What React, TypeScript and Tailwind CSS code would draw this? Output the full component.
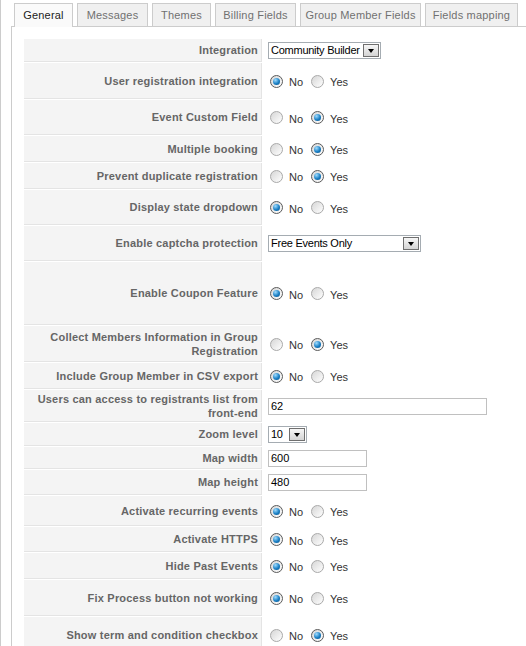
import React from 'react';

type Row = {
  label: React.ReactNode;
  h: string;
  kind: 'radio' | 'select' | 'input';
  yes?: boolean;
  value?: string;
  w?: string;
};

const tabs = [
  { label: 'General', w: 'w-[59px]', active: true },
  { label: 'Messages', w: 'w-[71px]' },
  { label: 'Themes', w: 'w-[59px]' },
  { label: 'Billing Fields', w: 'w-[81px]' },
  { label: 'Group Member Fields', w: 'w-[121px]' },
  { label: 'Fields mapping', w: 'w-[93px]' },
];

const rows: Row[] = [
  { label: 'Integration', h: 'h-[23px]', kind: 'select', value: 'Community Builder', w: 'w-[113px]' },
  { label: 'User registration integration', h: 'h-[36px]', kind: 'radio' },
  { label: 'Event Custom Field', h: 'h-[35px]', kind: 'radio', yes: true },
  { label: 'Multiple booking', h: 'h-[26px]', kind: 'radio', yes: true },
  { label: 'Prevent duplicate registration', h: 'h-[26px]', kind: 'radio', yes: true },
  { label: 'Display state dropdown', h: 'h-[35px]', kind: 'radio' },
  { label: 'Enable captcha protection', h: 'h-[35px]', kind: 'select', value: 'Free Events Only', w: 'w-[153px]' },
  { label: 'Enable Coupon Feature', h: 'h-[63px]', kind: 'radio' },
  {
    label: (
      <>
        Collect Members Information in Group
        <br />
        Registration
      </>
    ),
    h: 'h-[36px]',
    kind: 'radio',
    yes: true,
  },
  { label: 'Include Group Member in CSV export', h: 'h-[26px]', kind: 'radio' },
  {
    label: (
      <>
        Users can access to registrants list from
        <br />
        front-end
      </>
    ),
    h: 'h-[32px]',
    kind: 'input',
    value: '62',
    w: 'w-[219px]',
  },
  { label: 'Zoom level', h: 'h-[23px]', kind: 'select', value: '10', w: 'w-[39px]' },
  { label: 'Map width', h: 'h-[22px]', kind: 'input', value: '600', w: 'w-[99px]' },
  { label: 'Map height', h: 'h-[25px]', kind: 'input', value: '480', w: 'w-[99px]' },
  { label: 'Activate recurring events', h: 'h-[30px]', kind: 'radio' },
  { label: 'Activate HTTPS', h: 'h-[25px]', kind: 'radio' },
  { label: 'Hide Past Events', h: 'h-[26px]', kind: 'radio' },
  { label: 'Fix Process button not working', h: 'h-[36px]', kind: 'radio' },
  { label: 'Show term and condition checkbox', h: 'h-[36px]', kind: 'radio', yes: true },
];

// XP style radio button
function Radio({ checked }: { checked: boolean }) {
  return (
    <span
      className={`w-[13px] h-[13px] rounded-full border flex items-center justify-center shrink-0 bg-gradient-to-br from-[#d6d6d6] to-white ${
        checked ? 'border-[#5a5a5a]' : 'border-[#a9a9a9]'
      }`}
    >
      {checked && (
        <span className="w-[7px] h-[7px] rounded-full bg-[radial-gradient(circle_at_35%_30%,#9fdcff,#1a7fc4_55%,#0a4f86)]" />
      )}
    </span>
  );
}

function Select({ value, w }: { value: string; w: string }) {
  return (
    <div className={`${w} h-[17px] border border-[#a5acb2] bg-white flex items-center justify-between pl-[2px] pr-[1px]`}>
      <span className="text-[11px] text-black leading-none whitespace-nowrap tracking-[-0.25px]">{value}</span>
      <span className="w-[16px] h-[13px] border border-[#6f6f6f] bg-gradient-to-b from-[#f6f6f6] to-[#d4d4d4] flex items-center justify-center shrink-0">
        <span className="w-0 h-0 border-l-[3.5px] border-r-[3.5px] border-t-[4px] border-l-transparent border-r-transparent border-t-black mt-[1px]" />
      </span>
    </div>
  );
}

export default function App() {
  return (
    <div className="min-h-screen bg-white border-l border-[#cccccc] pl-[10px] font-['Liberation_Sans',Arial,sans-serif] text-[11px]">
      {/* Tabs */}
      <div className="flex items-end gap-[4px] pl-[3px] pt-[3px]">
        {tabs.map((t) => (
          <div
            key={t.label}
            className={`${t.w} text-center border border-[#cccccc] ${
              t.active
                ? 'h-[24px] -mb-px border-b-0 bg-[#fafafa] text-[#222] relative z-10'
                : 'h-[23px] border-b-0 bg-[#f0f0f0] text-[#707070]'
            } leading-[22px] tracking-[0.2px]`}
          >
            {t.label}
          </div>
        ))}
      </div>

      {/* Panel */}
      <div className="border-l border-t border-[#cccccc] bg-white pt-[12px] pl-[12px]">
        <div className="flex flex-col gap-[1px]">
          {rows.map((r, i) => (
            <div key={i} className={`flex ${r.h}`}>
              <div className="w-[238px] shrink-0 bg-[#f4f4f4] border-b border-r border-[#e4e4e4] flex items-center justify-end pr-[3px] text-right font-bold text-[#666] leading-[14px] tracking-[0.2px] whitespace-nowrap">
                <span>{r.label}</span>
              </div>
              <div className="flex-1 flex items-center pl-[6px]">
                {r.kind === 'radio' && (
                  <div className="flex items-center ml-[2px] text-[#333]">
                    <Radio checked={!r.yes} />
                    <span className="ml-[6px] mr-[8px] mt-[3px]">No</span>
                    <Radio checked={!!r.yes} />
                    <span className="ml-[6px] mt-[3px]">Yes</span>
                  </div>
                )}
                {r.kind === 'select' && <Select value={r.value!} w={r.w!} />}
                {r.kind === 'input' && (
                  <div className={`${r.w} h-[17px] border border-[#c0c0c0] bg-white flex items-center pl-[2px] text-black`}>
                    {r.value}
                  </div>
                )}
              </div>
            </div>
          ))}
        </div>
      </div>
    </div>
  );
}
